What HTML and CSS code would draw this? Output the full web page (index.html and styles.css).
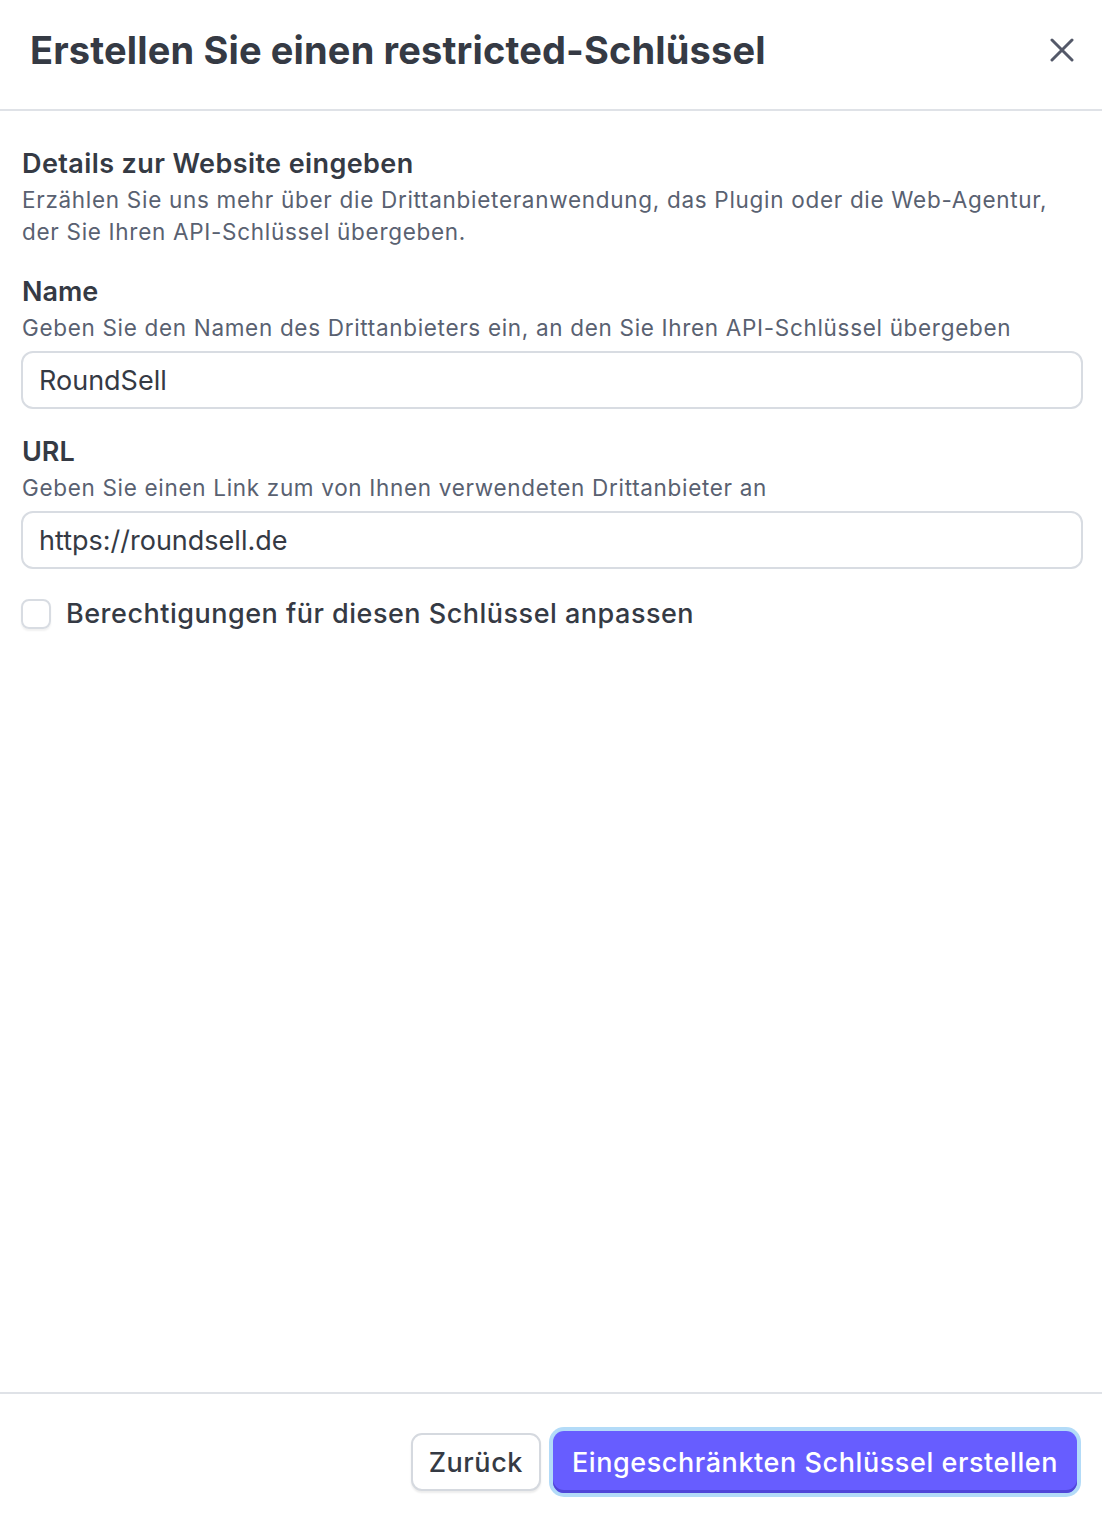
FILE: index.html
```html
<!DOCTYPE html>
<html lang="de">
<head>
  <meta charset="UTF-8">
  <meta name="viewport" content="width=device-width, initial-scale=1.0">
  <title>Restricted-Schlüssel erstellen</title>
  <link rel="stylesheet" href="styles.css">
</head>
<body>
  <div class="dialog">
    <header class="dialog-header">
      <h1>Erstellen Sie einen restricted-Schlüssel</h1>
      <button class="close-btn" aria-label="Schließen">
        <svg width="24" height="24" viewBox="0 0 24 24">
          <path d="M2 2 L22 22 M22 2 L2 22" stroke="#545969" stroke-width="3" stroke-linecap="round" fill="none"/>
        </svg>
      </button>
    </header>

    <main class="dialog-body">
      <h2 class="section-title">Details zur Website eingeben</h2>
      <p class="section-desc">Erzählen Sie uns mehr über die Drittanbieteranwendung, das Plugin oder die Web-Agentur, der Sie Ihren API-Schlüssel übergeben.</p>

      <div class="field">
        <label for="name">Name</label>
        <p class="help">Geben Sie den Namen des Drittanbieters ein, an den Sie Ihren API-Schlüssel übergeben</p>
        <input type="text" id="name" value="RoundSell">
      </div>

      <div class="field">
        <label for="url">URL</label>
        <p class="help">Geben Sie einen Link zum von Ihnen verwendeten Drittanbieter an</p>
        <input type="text" id="url" value="https://roundsell.de">
      </div>

      <label class="check-row">
        <span class="checkbox"></span>
        <span>Berechtigungen für diesen Schlüssel anpassen</span>
      </label>
    </main>

    <footer class="dialog-footer">
      <button class="btn btn-secondary">Zurück</button>
      <button class="btn btn-primary">Eingeschränkten Schlüssel erstellen</button>
    </footer>
  </div>
</body>
</html>
```

FILE: styles.css
```css
* {
  box-sizing: border-box;
}

body {
  margin: 0;
  font-family: Inter, "Noto Sans", sans-serif;
  color: #353a44;
  background: #fff;
}

.dialog {
  display: flex;
  flex-direction: column;
  min-height: 100vh;
}

.dialog-header {
  display: flex;
  align-items: center;
  justify-content: space-between;
  height: 111px;
  padding: 0 28px 10px 30px;
  border-bottom: 2px solid #dfe2e7;
}

.dialog-header h1 {
  margin: 0;
  font-size: 38px;
  font-weight: 700;
  letter-spacing: 0.15px;
  color: #353a44;
}

.close-btn {
  background: none;
  border: none;
  padding: 0;
  width: 24px;
  height: 24px;
  cursor: pointer;
}

.dialog-body {
  flex: 1;
  padding: 35px 19px 0 21px;
}

.section-title {
  margin: 0 0 0 1px;
  font-size: 27px;
  line-height: 36px;
  font-weight: 600;
  letter-spacing: 0.4px;
}

.section-desc {
  margin: 2px 0 0 1px;
  font-size: 22.5px;
  line-height: 32px;
  color: #596171;
  letter-spacing: 0.7px;
}

.field {
  margin-top: 26px;
}

.field + .field {
  margin-top: 25px;
}

.field label {
  display: block;
  margin-left: 1px;
  font-size: 27px;
  line-height: 36px;
  font-weight: 600;
}

.help {
  margin: 2px 0 7px 1px;
  font-size: 22.5px;
  line-height: 32px;
  color: #596171;
  letter-spacing: 0.68px;
}

.field input {
  display: block;
  width: 100%;
  height: 58px;
  padding: 0 16px;
  border: 2px solid #d8dce2;
  border-radius: 12px;
  font-family: inherit;
  font-size: 27px;
  color: #353a44;
  outline: none;
}

.check-row {
  display: flex;
  align-items: center;
  gap: 15px;
  margin-top: 28px;
  font-size: 27px;
  font-weight: 500;
  letter-spacing: 0.5px;
  color: #353a44;
}

.checkbox {
  width: 30px;
  height: 30px;
  border: 2px solid #d8dce2;
  border-radius: 8px;
  box-shadow: 0 2px 2px rgba(0, 0, 0, 0.06);
}

.dialog-footer {
  display: flex;
  justify-content: flex-end;
  align-items: center;
  gap: 12px;
  padding: 37px 25px 23px;
  border-top: 2px solid #dfe2e7;
}

.btn {
  height: 58px;
  border-radius: 11px;
  font-family: inherit;
  font-size: 27px;
  font-weight: 500;
  letter-spacing: 0.57px;
  cursor: pointer;
}

.btn-secondary {
  padding: 0 16px;
  background: #fff;
  color: #353a44;
  border: 2px solid #d5d9df;
  box-shadow: 0 2px 2px rgba(0, 0, 0, 0.08);
}

.btn-primary {
  height: 62px;
  padding: 0 19px;
  background: #675dff;
  color: #fff;
  border: none;
  box-shadow: 0 0 0 4px #b3dbf8, inset 0 -3px 0 #5046d8;
}
```
